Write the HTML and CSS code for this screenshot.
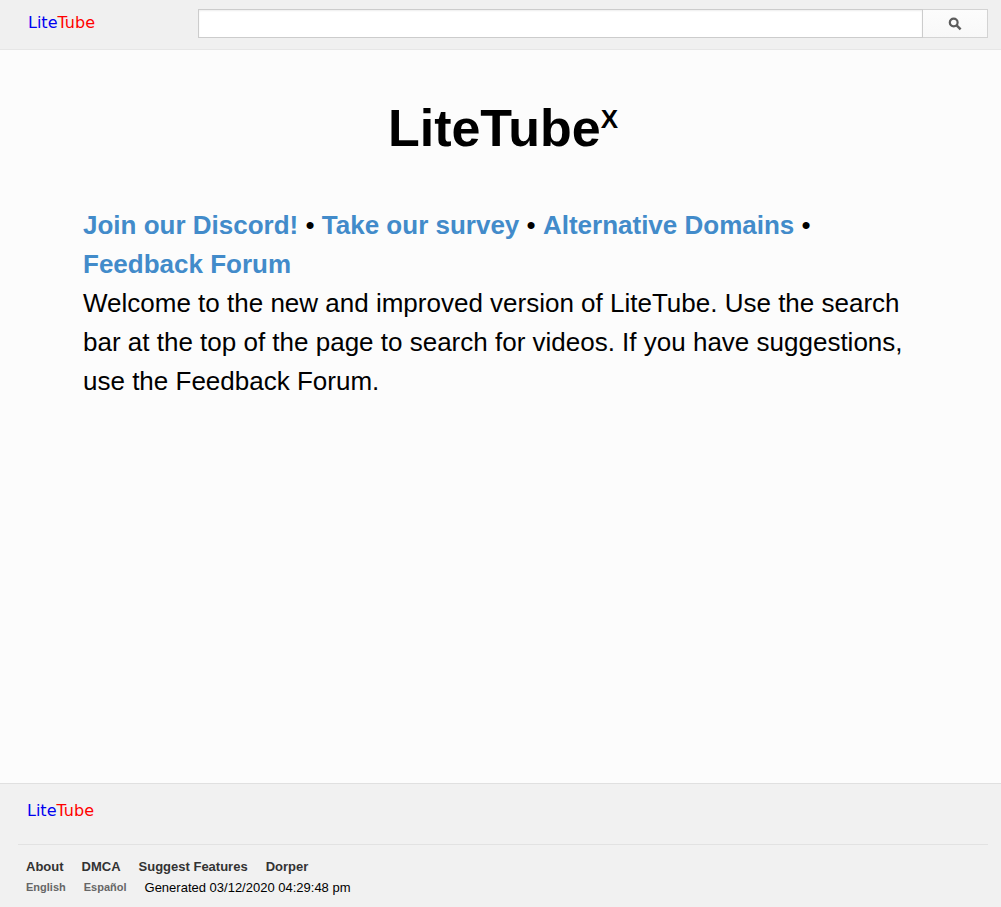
FILE: index.html
```html
<!DOCTYPE html>
<html lang="en">
<head>
<meta charset="utf-8">
<title>LiteTube</title>
<link rel="stylesheet" href="styles.css">
</head>
<body>
<header class="masthead">
  <a class="logo" href="#"><span class="logo-lite">Lite</span><span class="logo-tube">Tube</span></a>
  <form class="search" role="search">
    <input class="search-input" type="text" aria-label="Search">
    <button class="search-button" type="submit" aria-label="Search">
      <svg class="search-icon" viewBox="0 0 14 14" aria-hidden="true"><circle cx="5.7" cy="5.5" r="3.9" fill="none" stroke="currentColor" stroke-width="2.2"/><path d="M8.4 8.2L12.6 12.4" stroke="currentColor" stroke-width="2.5"/></svg>
    </button>
  </form>
</header>
<main class="content">
  <h1 class="title">LiteTube<sup class="title-mark">X</sup></h1>
  <div class="intro">
    <p class="links"><a href="#">Join our Discord!</a> • <a href="#">Take our survey</a> • <a href="#">Alternative Domains</a> • <a href="#">Feedback Forum</a></p>
    <p class="welcome">Welcome to the new and improved version of LiteTube. Use the search bar at the top of the page to search for videos. If you have suggestions, use the Feedback Forum.</p>
  </div>
</main>
<footer class="footer">
  <div class="footer-top"><a class="logo" href="#"><span class="logo-lite">Lite</span><span class="logo-tube">Tube</span></a></div>
  <nav class="footer-primary"><a href="#">About</a><a href="#">DMCA</a><a href="#">Suggest Features</a><a href="#">Dorper</a></nav>
  <div class="footer-secondary"><a href="#">English</a><a href="#">Español</a><span class="generated">Generated 03/12/2020 04:29:48 pm</span></div>
</footer>
</body>
</html>
```
FILE: styles.css
```css
* { box-sizing: border-box; }
body {
  margin: 0;
  min-height: 100vh;
  display: flex;
  flex-direction: column;
  background: #fcfcfc;
  color: #000;
  font-family: "Liberation Sans", Arial, sans-serif;
}
a { text-decoration: none; }
h1, p { margin: 0; }
.masthead {
  display: flex;
  align-items: flex-start;
  padding: 9px 13px 11px 28px;
  background: #f0f0f0;
  border-bottom: 1px solid #e6e6e6;
}
.logo {
  font: 16px/28px "DejaVu Sans", sans-serif;
}
.logo-lite { color: #0000f0; }
.logo-tube { color: #ff0000; }
.masthead .logo { flex: 0 0 170px; }
.search { display: flex; flex: 1; height: 29px; }
.search-input {
  flex: 1;
  min-width: 0;
  padding: 2px 6px;
  border: 1px solid #ccc;
  background: #fff;
  box-shadow: inset 0 1px 2px #eee;
  font: 16px "Liberation Sans", Arial, sans-serif;
}
.search-button {
  display: flex;
  align-items: center;
  justify-content: center;
  width: 65px;
  padding: 0;
  border: 1px solid #d3d3d3;
  border-left: 0;
  background: linear-gradient(#fcfcfc, #f8f8f8);
  color: #5c5c5c;
}
.search-icon { width: 14px; height: 14px; }
.content { flex: 1; padding: 48px 78px 48px 83px; }
.title { text-align: center; font-size: 52px; line-height: 60px; }
.title-mark { font-size: 26px; line-height: 0; vertical-align: 18px; }
.intro { margin-top: 48px; font-size: 26px; line-height: 39px; }
.links a { color: #428bca; font-weight: bold; }
.footer {
  padding: 13px 13px 9px 18px;
  background: #f1f1f1;
  border-top: 1px solid #e0e0e0;
}
.footer-top { padding: 0 9px 19px; border-bottom: 1px solid #e2e2e2; }
.footer-primary, .footer-secondary {
  display: flex;
  align-items: center;
  gap: 18px;
  padding-left: 8px;
  font-size: 13px;
  line-height: 21px;
}
.footer-primary { margin-top: 11px; }
.footer-primary a { color: #333; font-weight: bold; }
.footer-secondary a { color: #666; font-size: 11px; font-weight: bold; }
```
